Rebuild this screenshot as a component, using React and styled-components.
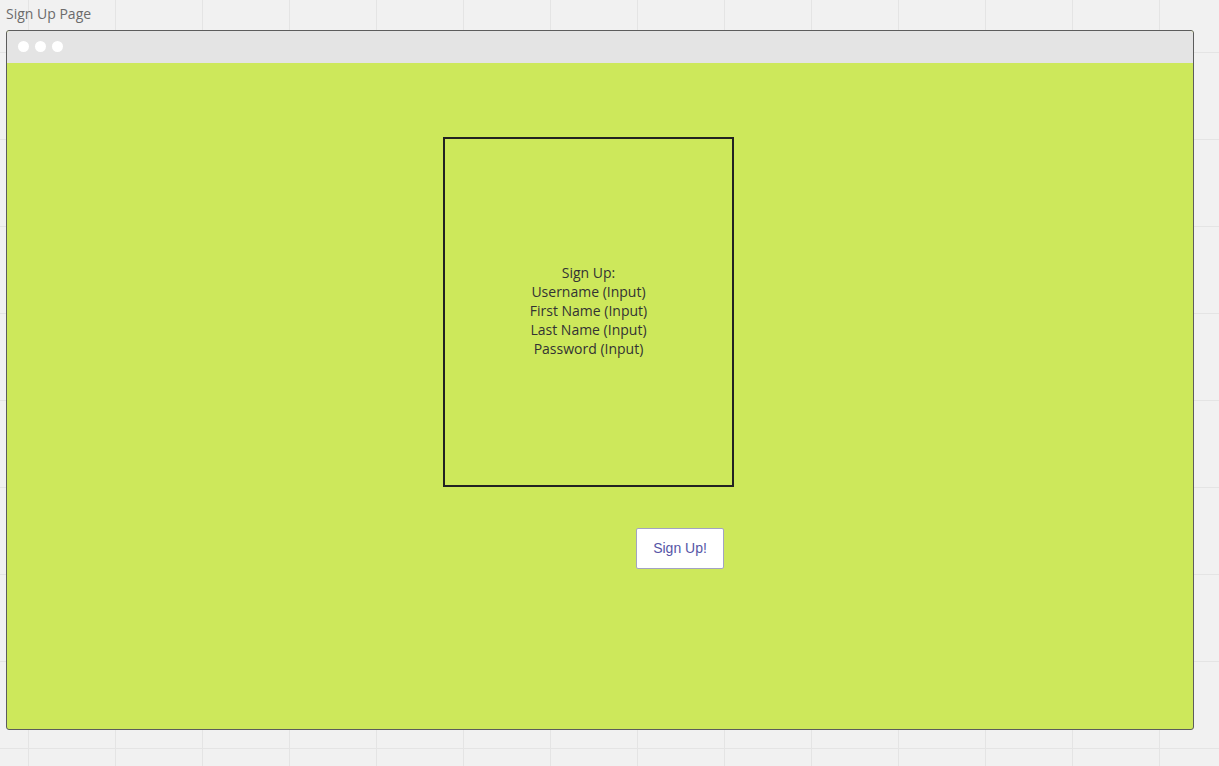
import styled, { createGlobalStyle } from "styled-components";

const GlobalStyle = createGlobalStyle`
  html, body {
    margin: 0;
    padding: 0;
  }
  body {
    width: 1219px;
    height: 766px;
    overflow: hidden;
    font-family: "Open Sans", "Liberation Sans", sans-serif;
    background-color: #f1f1f1;
    background-image:
      linear-gradient(to right, #e4e4e4 1px, transparent 1px),
      linear-gradient(to bottom, #e4e4e4 1px, transparent 1px);
    background-size: 87px 87px;
    background-position: 28px 52px;
  }
`;

const Board = styled.div`
  padding: 5px 0 0 6px;
`;

const PageTitle = styled.div`
  font-size: 14px;
  line-height: 18px;
  color: #6b6b6b;
  height: 25px;
`;

const BrowserWindow = styled.div`
  width: 1186px;
  height: 698px;
  border: 1px solid #5c5c5c;
  border-radius: 3px;
  display: flex;
  flex-direction: column;
  overflow: hidden;
  background: #cde85b;
`;

const TitleBar = styled.div`
  box-sizing: border-box;
  height: 32px;
  padding: 0 0 2px 11px;
  background: #e4e4e4;
  display: flex;
  align-items: center;
  gap: 6px;
  flex-shrink: 0;
`;

const Dot = styled.span`
  width: 11px;
  height: 11px;
  border-radius: 50%;
  background: #ffffff;
`;

const Content = styled.div`
  flex: 1;
  display: flex;
  flex-direction: column;
  align-items: flex-start;
  padding: 74px 0 0 436px;
`;

const FormBox = styled.div`
  width: 287px;
  height: 346px;
  border: 2px solid #222222;
  display: flex;
  align-items: center;
  justify-content: center;
  text-align: center;
  font-size: 14px;
  line-height: 19px;
  color: #333333;
`;

const FieldList = styled.div`
  margin-top: -4px;
`;

const SubmitButton = styled.button`
  box-sizing: border-box;
  margin: 41px 0 0 193px;
  width: 88px;
  height: 41px;
  background: #ffffff;
  border: 1px solid #a3a3c2;
  border-radius: 2px;
  font-family: "Liberation Sans", Arial, sans-serif;
  font-size: 14px;
  color: #5656a6;
  padding: 0 0 2px;
`;

const fields = ["Username", "First Name", "Last Name", "Password"];

function App() {
  return (
    <>
      <GlobalStyle />
      <Board>
        <PageTitle>Sign Up Page</PageTitle>
        <BrowserWindow>
          <TitleBar>
            <Dot />
            <Dot />
            <Dot />
          </TitleBar>
          <Content>
            <FormBox>
              <FieldList>
                Sign Up:
                {fields.map((f) => (
                  <div key={f}>{f} (Input)</div>
                ))}
              </FieldList>
            </FormBox>
            <SubmitButton>Sign Up!</SubmitButton>
          </Content>
        </BrowserWindow>
      </Board>
    </>
  );
}

export default App;
